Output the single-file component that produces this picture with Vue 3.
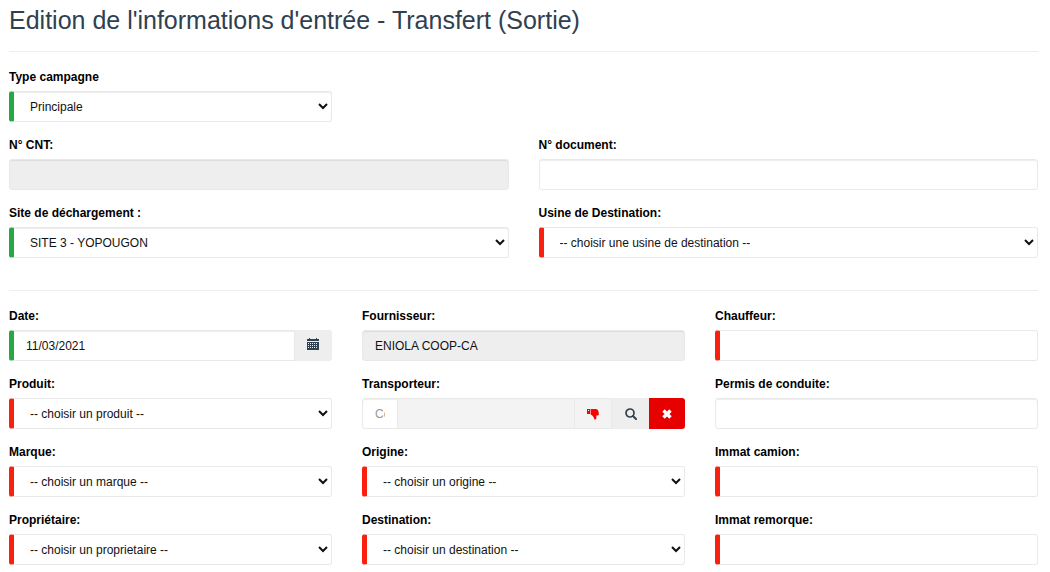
<script setup>
import { reactive } from 'vue'

const form = reactive({
  campagne: 'Principale',
  cnt: '',
  document: '',
  site: 'SITE 3 - YOPOUGON',
  usine: '-- choisir une usine de destination --',
  date: '11/03/2021',
  fournisseur: 'ENIOLA COOP-CA',
  chauffeur: '',
  produit: '-- choisir un produit --',
  code: '',
  transporteur: '',
  permis: '',
  marque: '-- choisir un marque --',
  origine: '-- choisir un origine --',
  camion: '',
  proprietaire: '-- choisir un proprietaire --',
  destination: '-- choisir un destination --',
  remorque: ''
})

const general = [
  { id: 'cnt', label: 'N° CNT:', type: 'text', readonly: true },
  { id: 'document', label: 'N° document:', type: 'text' },
  { id: 'site', label: 'Site de déchargement :', type: 'select', state: 'valid' },
  { id: 'usine', label: 'Usine de Destination:', type: 'select', state: 'invalid' }
]

const details = [
  { id: 'date', label: 'Date:', type: 'date', state: 'valid' },
  { id: 'fournisseur', label: 'Fournisseur:', type: 'text', readonly: true },
  { id: 'chauffeur', label: 'Chauffeur:', type: 'text', state: 'invalid' },
  { id: 'produit', label: 'Produit:', type: 'select', state: 'invalid' },
  { id: 'code', label: 'Transporteur:', type: 'lookup' },
  { id: 'permis', label: 'Permis de conduite:', type: 'text' },
  { id: 'marque', label: 'Marque:', type: 'select', state: 'invalid' },
  { id: 'origine', label: 'Origine:', type: 'select', state: 'invalid' },
  { id: 'camion', label: 'Immat camion:', type: 'text', state: 'invalid' },
  { id: 'proprietaire', label: 'Propriétaire:', type: 'select', state: 'invalid' },
  { id: 'destination', label: 'Destination:', type: 'select', state: 'invalid' },
  { id: 'remorque', label: 'Immat remorque:', type: 'text', state: 'invalid' }
]
</script>

<template>
  <main class="page">
    <h1>Edition de l'informations d'entrée - Transfert (Sortie)</h1>
    <form @submit.prevent>
      <section class="grid three first">
        <div class="field">
          <label for="campagne">Type campagne</label>
          <select id="campagne" v-model="form.campagne" class="control valid">
            <option>{{ form.campagne }}</option>
          </select>
        </div>
      </section>

      <section class="grid two">
        <div v-for="f in general" :key="f.id" class="field">
          <label :for="f.id">{{ f.label }}</label>
          <select v-if="f.type === 'select'" :id="f.id" v-model="form[f.id]" class="control" :class="f.state">
            <option>{{ form[f.id] }}</option>
          </select>
          <input v-else :id="f.id" v-model="form[f.id]" type="text" class="control" :readonly="f.readonly">
        </div>
      </section>

      <section class="grid three details">
        <div v-for="f in details" :key="f.id" class="field">
          <label :for="f.id">{{ f.label }}</label>

          <select v-if="f.type === 'select'" :id="f.id" v-model="form[f.id]" class="control" :class="f.state">
            <option>{{ form[f.id] }}</option>
          </select>

          <div v-else-if="f.type === 'date'" class="group">
            <input :id="f.id" v-model="form.date" type="text" class="control valid">
            <button type="button" class="addon calendar" aria-label="Ouvrir le calendrier">
              <svg width="12" height="12" viewBox="0 0 12 12" shape-rendering="crispEdges">
                <path fill="#2f4050" fill-rule="evenodd" d="M2 0h1v1h6V0h1v1h2v2H0V1h2zM0 4h12v8H0zM1 5v1h1V5zM3 5v1h1V5zM5 5v1h1V5zM7 5v1h1V5zM9 5v1h1V5zM1 7v1h1V7zM3 7v1h1V7zM5 7v1h1V7zM7 7v1h1V7zM9 7v1h1V7zM1 9v1h1V9zM3 9v1h1V9zM5 9v1h1V9zM7 9v1h1V9zM9 9v1h1V9z" />
              </svg>
            </button>
          </div>

          <div v-else-if="f.type === 'lookup'" class="group">
            <input id="code" v-model="form.code" type="text" class="control code" placeholder="Code">
            <input v-model="form.transporteur" type="text" class="control name" aria-label="Nom du transporteur" readonly>
            <span class="addon status">
              <svg width="12" height="12" viewBox="0 0 12 12" fill="#f00">
                <path d="M0 1h3v5H0zM3.6 1h5.3c1.4 0 2 .8 2 1.5.6.4.7 1 .5 1.5.5.5.5 1 .3 1.5.5.9-.1 1.9-1 1.9H9.2c.2 1.2.4 2.2 0 3.4-.3 1-1.6 1-2 .1-.3-1.5-.7-2-1.8-3.1-.5-.6-1-1.2-1.8-1.3z" />
                <path d="M1 2h1v1H1z" fill="#f3f3f3" />
              </svg>
            </span>
            <button type="button" class="addon search" aria-label="Rechercher">
              <svg width="12" height="12" viewBox="0 0 12 12" fill="none" stroke="#2f4050">
                <circle cx="5" cy="5" r="4" stroke-width="1.7" />
                <path d="m8 8 3 3" stroke-width="2" stroke-linecap="round" />
              </svg>
            </button>
            <button type="button" class="addon clear" aria-label="Effacer">
              <svg width="10" height="10" viewBox="0 0 10 10" stroke="#fff" stroke-width="3.4">
                <path d="m1.5 1.5 7 7m0-7-7 7" />
              </svg>
            </button>
          </div>

          <input v-else :id="f.id" v-model="form[f.id]" type="text" class="control" :class="f.state" :readonly="f.readonly">
        </div>
      </section>
    </form>
  </main>
</template>

<style>
body {
  background: #fff;
}
</style>

<style scoped>
.page {
  padding: 5px 12px 7px 9px;
  font-family: "Liberation Sans", Arial, sans-serif;
  font-size: 12px;
  color: #000;
}

h1 {
  margin: 0;
  padding-bottom: 16px;
  border-bottom: 1px solid #eee;
  font-size: 25px;
  font-weight: 400;
  line-height: 30px;
  color: #2f4050;
}

.grid {
  display: grid;
  gap: 15px 30px;
}

.three {
  grid-template-columns: repeat(3, minmax(0, 1fr));
}

.two {
  grid-template-columns: repeat(2, minmax(0, 1fr));
  padding-bottom: 32px;
  border-bottom: 1px solid #eee;
}

.first {
  padding: 17px 0 15px;
}

.details {
  padding-top: 17px;
}

label {
  display: block;
  margin-bottom: 5px;
  font-weight: 700;
  line-height: 17px;
}

.control {
  display: block;
  box-sizing: border-box;
  width: 100%;
  height: 31px;
  margin: 0;
  padding: 6px 12px;
  border: 1px solid #e9e9e9;
  border-radius: 3px;
  outline: none;
  background-color: #fff;
  box-shadow: inset 0 1px 1px rgba(0, 0, 0, 0.075);
  font: inherit;
  line-height: 17px;
  color: #111;
}

.control[readonly] {
  background-color: #eee;
}

.control::placeholder {
  color: #999;
}

.valid {
  border-left: 5px solid #28a745;
}

.invalid {
  border-left: 5px solid #fa2010;
  box-shadow: none;
}

.group {
  display: flex;
}

.group .control:first-child {
  border-top-right-radius: 0;
  border-bottom-right-radius: 0;
}

.group .control.code {
  flex: none;
  width: 36px;
}

.group .control.name {
  flex: 1;
  min-width: 0;
  border-left: 0;
  border-radius: 0;
  background-color: #f3f3f3;
  box-shadow: none;
}

.addon {
  display: flex;
  flex: none;
  box-sizing: border-box;
  align-items: center;
  justify-content: center;
  width: 37px;
  height: 31px;
  margin: 0;
  padding: 0;
  border: 0;
  background: #eee;
}

.calendar {
  padding: 0 2px 3px 0;
  border-radius: 0 3px 3px 0;
}

.status {
  border: solid #e9e9e9;
  border-width: 1px 1px 1px 0;
  background: #f3f3f3;
}

.clear {
  width: 36px;
  border-radius: 0 3px 3px 0;
  background: #e60000;
}
</style>
